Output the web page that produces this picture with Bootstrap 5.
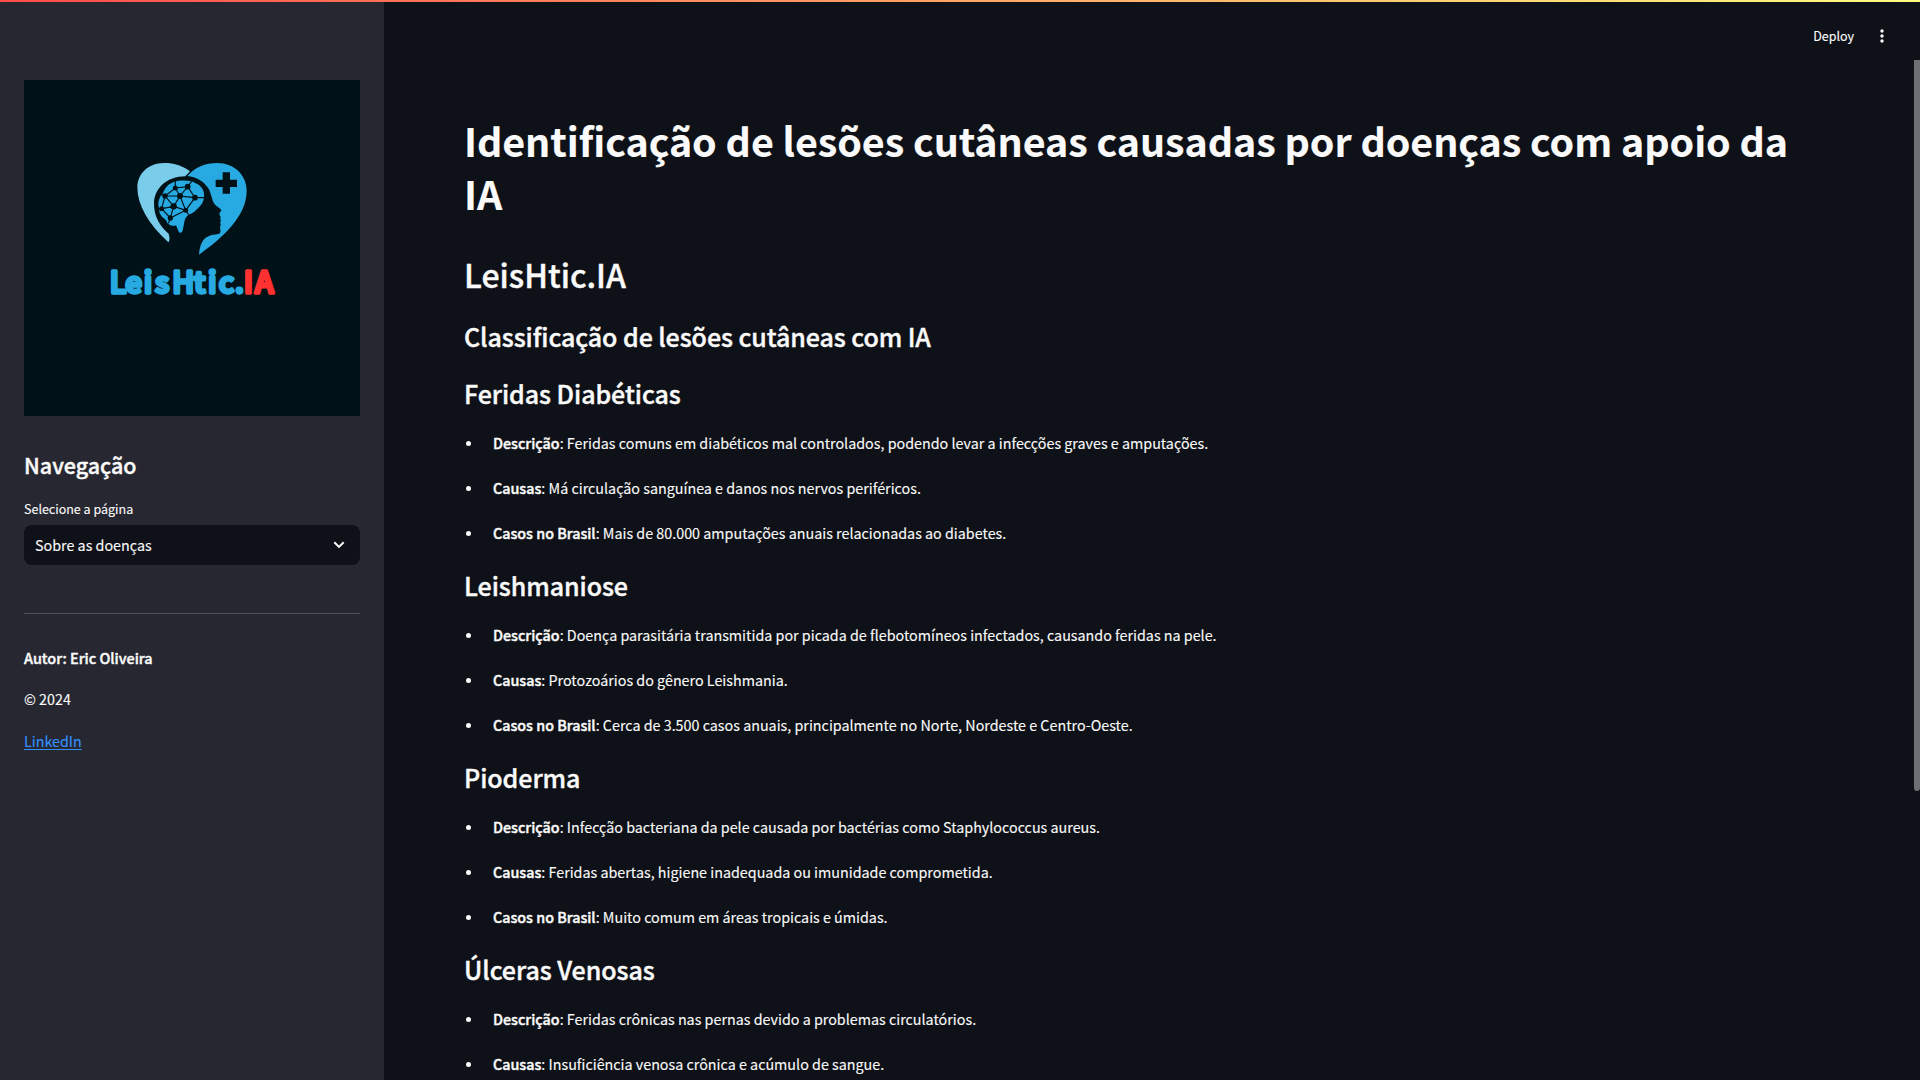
<!DOCTYPE html>
<html lang="pt-BR">
<head>
<meta charset="utf-8">
<meta name="viewport" content="width=device-width, initial-scale=1">
<title>LeisHtic.IA</title>
<link rel="stylesheet" href="https://cdn.jsdelivr.net/npm/bootstrap@5.3.0/dist/css/bootstrap.min.css">
<style>
  body { background: #0e1117; color: #fafafa; font-family: "Noto Sans CJK JP", "Noto Sans", sans-serif; font-size: 14.32px; line-height: 25.6px; -webkit-text-stroke: .12px currentColor; }
  h1, h2, h3 { margin: 0; font-weight: 500; line-height: 1.2; }
  h2, h3, strong { -webkit-text-stroke: .4px currentColor; }
  strong { font-weight: 500; }
  .top-stripe { height: 2px; background: linear-gradient(90deg, #ff4b4b, #fffd80); z-index: 5; }
  .side-panel { width: 384px; background: #262730; padding: 80px 24px 0; }
  .brand-art { width: 336px; height: 336px; -webkit-text-stroke: initial; }
  .side-title { font-size: 21.5px; line-height: 28.8px; margin-top: 35px; }
  .field-label { font-size: 12.5px; line-height: 20px; margin-top: 19px; }
  .page-select { height: 40px; margin-top: 6px; padding: 0 10px 0 11px; border-radius: 8px; background: #0e1117; }
  .side-rule { margin: 48px 0 31px; border-top: 1px solid #4f5058; opacity: 1; }
  .side-note { margin-bottom: 16px; }
  .side-note strong { font-size: 14.45px; }
  .side-link { color: #3291ff; text-underline-offset: 2px; }
  .tool-bar { top: 6px; right: 0; height: 60px; padding-right: 29px; font-size: 12.5px; gap: 19px; }
  .doc-area { padding: 114px 96px 0 80px; }
  .doc-title { font-size: 39.4px; font-weight: 700; line-height: 52.8px; letter-spacing: -.06px; }
  .doc-brand { font-size: 32.1px; line-height: 43.2px; margin-top: 33.5px; }
  .doc-lead { font-size: 25px; line-height: 33.6px; margin-top: 24px; letter-spacing: -.08px; }
  .disease h3 { font-size: 25px; line-height: 33.6px; letter-spacing: -.06px; }
  .disease { height: 192px; }
  .disease ul { margin: 19px 0 0; padding: 0; list-style: none; }
  .disease li { display: flex; align-items: center; height: 25px; margin-bottom: 20px; }
  .disease li::before { content: ""; width: 5px; height: 5px; margin: 3px 22px 0 2px; border-radius: 50%; background: #fafafa; flex: none; }
  .disease-list { margin-top: 23.4px; }
  .scroll-thumb { right: 0; top: 60px; width: 6px; height: 731px; background: #6e6f74; border-radius: 0 0 3px 3px; }
</style>
<script src="https://cdn.jsdelivr.net/npm/bootstrap@5.3.0/dist/js/bootstrap.bundle.min.js"></script>
</head>
<body>
<div class="vh-100 overflow-hidden position-relative d-flex">
  <div class="top-stripe position-absolute top-0 start-0 w-100"></div>

  <aside class="side-panel flex-shrink-0 h-100">
    <svg class="brand-art d-block" viewBox="-228 -210 1008 1008" role="img" aria-label="LeisHtic.IA">
      <rect x="-228" y="-210" width="1008" height="1008" fill="#001117"/>
      <path fill="#7acdea" d="M270 64C240 42 215 39 192 39C144 39 112 72 112 112C112 165 145 222 205 277C211 269 208 259 206 251C176 226 162 195 162 162C162 116 200 79 256 79Z"/>
      <path fill="#27aae1" d="M262 78C285 52 315 39 352 39C403 39 440 76 440 122C440 200 366 264 297 314C299 288 306 264 329 257C348 251 358 256 361 246C363 239 358 233 361 228C365 223 358 220 362 214C365 210 358 207 362 201C357 194 357 187 363 184C369 178 350 172 342 160C335 148 334 130 325 115C310 92 288 81 262 78Z"/>
      <path fill="#001117" d="M368 67h22v22h21v22h-21v20h-22v-20h-21V89h21z"/>
      <path fill="#27aae1" d="M222 96C240 90 270 90 286 99C306 108 314 123 312 140C311 158 301 169 288 180C281 191 269 190 261 199C252 208 253 222 249 237C247 251 238 251 235 242L228 226C218 231 201 224 198 210C184 200 176 189 178 176C171 160 178 140 189 130C194 113 206 101 222 96Z"/>
      <g stroke="#001117" stroke-width="3.5" fill="none">
        <path d="M226 114L263 110L285 143L240 138L226 114L195 138L240 138L263 110L275 94M226 114V94M195 138L185 176L221 169L195 138L180 132M240 138L221 169L257 181L240 138M257 181L285 143H312M185 176L211 204L221 169M211 204L257 181L266 194M211 204L205 220M185 176H174"/>
      </g>
      <g fill="#001117">
        <circle cx="226" cy="114" r="7.5"/><circle cx="263" cy="110" r="8.5"/><circle cx="195" cy="138" r="8"/>
        <circle cx="240" cy="138" r="9"/><circle cx="285" cy="143" r="8.5"/><circle cx="185" cy="176" r="7.5"/>
        <circle cx="221" cy="169" r="9.5"/><circle cx="257" cy="181" r="7.5"/><circle cx="211" cy="204" r="8"/>
      </g>
      <g font-family="'Noto Sans CJK JP', sans-serif" font-weight="500" font-size="89" stroke-width="10" stroke-linejoin="round">
        <text x="29 76 131 165 217 281 324 356 405" y="430" fill="#27aae1" stroke="#27aae1">LeisHtic.</text>
        <text x="431 465" y="430" fill="#ff3131" stroke="#ff3131">IA</text>
      </g>
    </svg>
    <h2 class="side-title">Navegação</h2>
    <div class="field-label">Selecione a página</div>
    <div class="page-select d-flex align-items-center justify-content-between">
      <span>Sobre as doenças</span>
      <svg width="22" height="22" viewBox="0 0 22 22" fill="none" stroke="#fafafa" stroke-width="2"><path d="M6.3 8.2L11 12.9L15.7 8.2"/></svg>
    </div>
    <hr class="side-rule">
    <p class="side-note"><strong>Autor: Eric Oliveira</strong></p>
    <p class="side-note">© 2024</p>
    <p class="side-note"><a class="side-link" href="#">LinkedIn</a></p>
  </aside>

  <main class="doc-area flex-grow-1">
    <h1 class="doc-title">Identificação de lesões cutâneas causadas por doenças com apoio da IA</h1>
    <h2 class="doc-brand">LeisHtic.IA</h2>
    <h3 class="doc-lead">Classificação de lesões cutâneas com IA</h3>
    <div class="disease-list">
      <section class="disease">
        <h3>Feridas Diabéticas</h3>
        <ul>
          <li><span><strong>Descrição</strong>: Feridas comuns em diabéticos mal controlados, podendo levar a infecções graves e amputações.</span></li>
          <li><span><strong>Causas</strong>: Má circulação sanguínea e danos nos nervos periféricos.</span></li>
          <li><span><strong>Casos no Brasil</strong>: Mais de 80.000 amputações anuais relacionadas ao diabetes.</span></li>
        </ul>
      </section>
      <section class="disease">
        <h3>Leishmaniose</h3>
        <ul>
          <li><span><strong>Descrição</strong>: Doença parasitária transmitida por picada de flebotomíneos infectados, causando feridas na pele.</span></li>
          <li><span><strong>Causas</strong>: Protozoários do gênero Leishmania.</span></li>
          <li><span><strong>Casos no Brasil</strong>: Cerca de 3.500 casos anuais, principalmente no Norte, Nordeste e Centro-Oeste.</span></li>
        </ul>
      </section>
      <section class="disease">
        <h3>Pioderma</h3>
        <ul>
          <li><span><strong>Descrição</strong>: Infecção bacteriana da pele causada por bactérias como Staphylococcus aureus.</span></li>
          <li><span><strong>Causas</strong>: Feridas abertas, higiene inadequada ou imunidade comprometida.</span></li>
          <li><span><strong>Casos no Brasil</strong>: Muito comum em áreas tropicais e úmidas.</span></li>
        </ul>
      </section>
      <section class="disease">
        <h3>Úlceras Venosas</h3>
        <ul>
          <li><span><strong>Descrição</strong>: Feridas crônicas nas pernas devido a problemas circulatórios.</span></li>
          <li><span><strong>Causas</strong>: Insuficiência venosa crônica e acúmulo de sangue.</span></li>
        </ul>
      </section>
    </div>
  </main>

  <header class="tool-bar position-absolute d-flex align-items-center">
    <span>Deploy</span>
    <svg width="18" height="18" viewBox="0 0 18 18" fill="#fafafa"><circle cx="9" cy="4" r="1.7"/><circle cx="9" cy="9" r="1.7"/><circle cx="9" cy="14" r="1.7"/></svg>
  </header>
  <div class="scroll-thumb position-absolute"></div>
</div>
</body>
</html>
